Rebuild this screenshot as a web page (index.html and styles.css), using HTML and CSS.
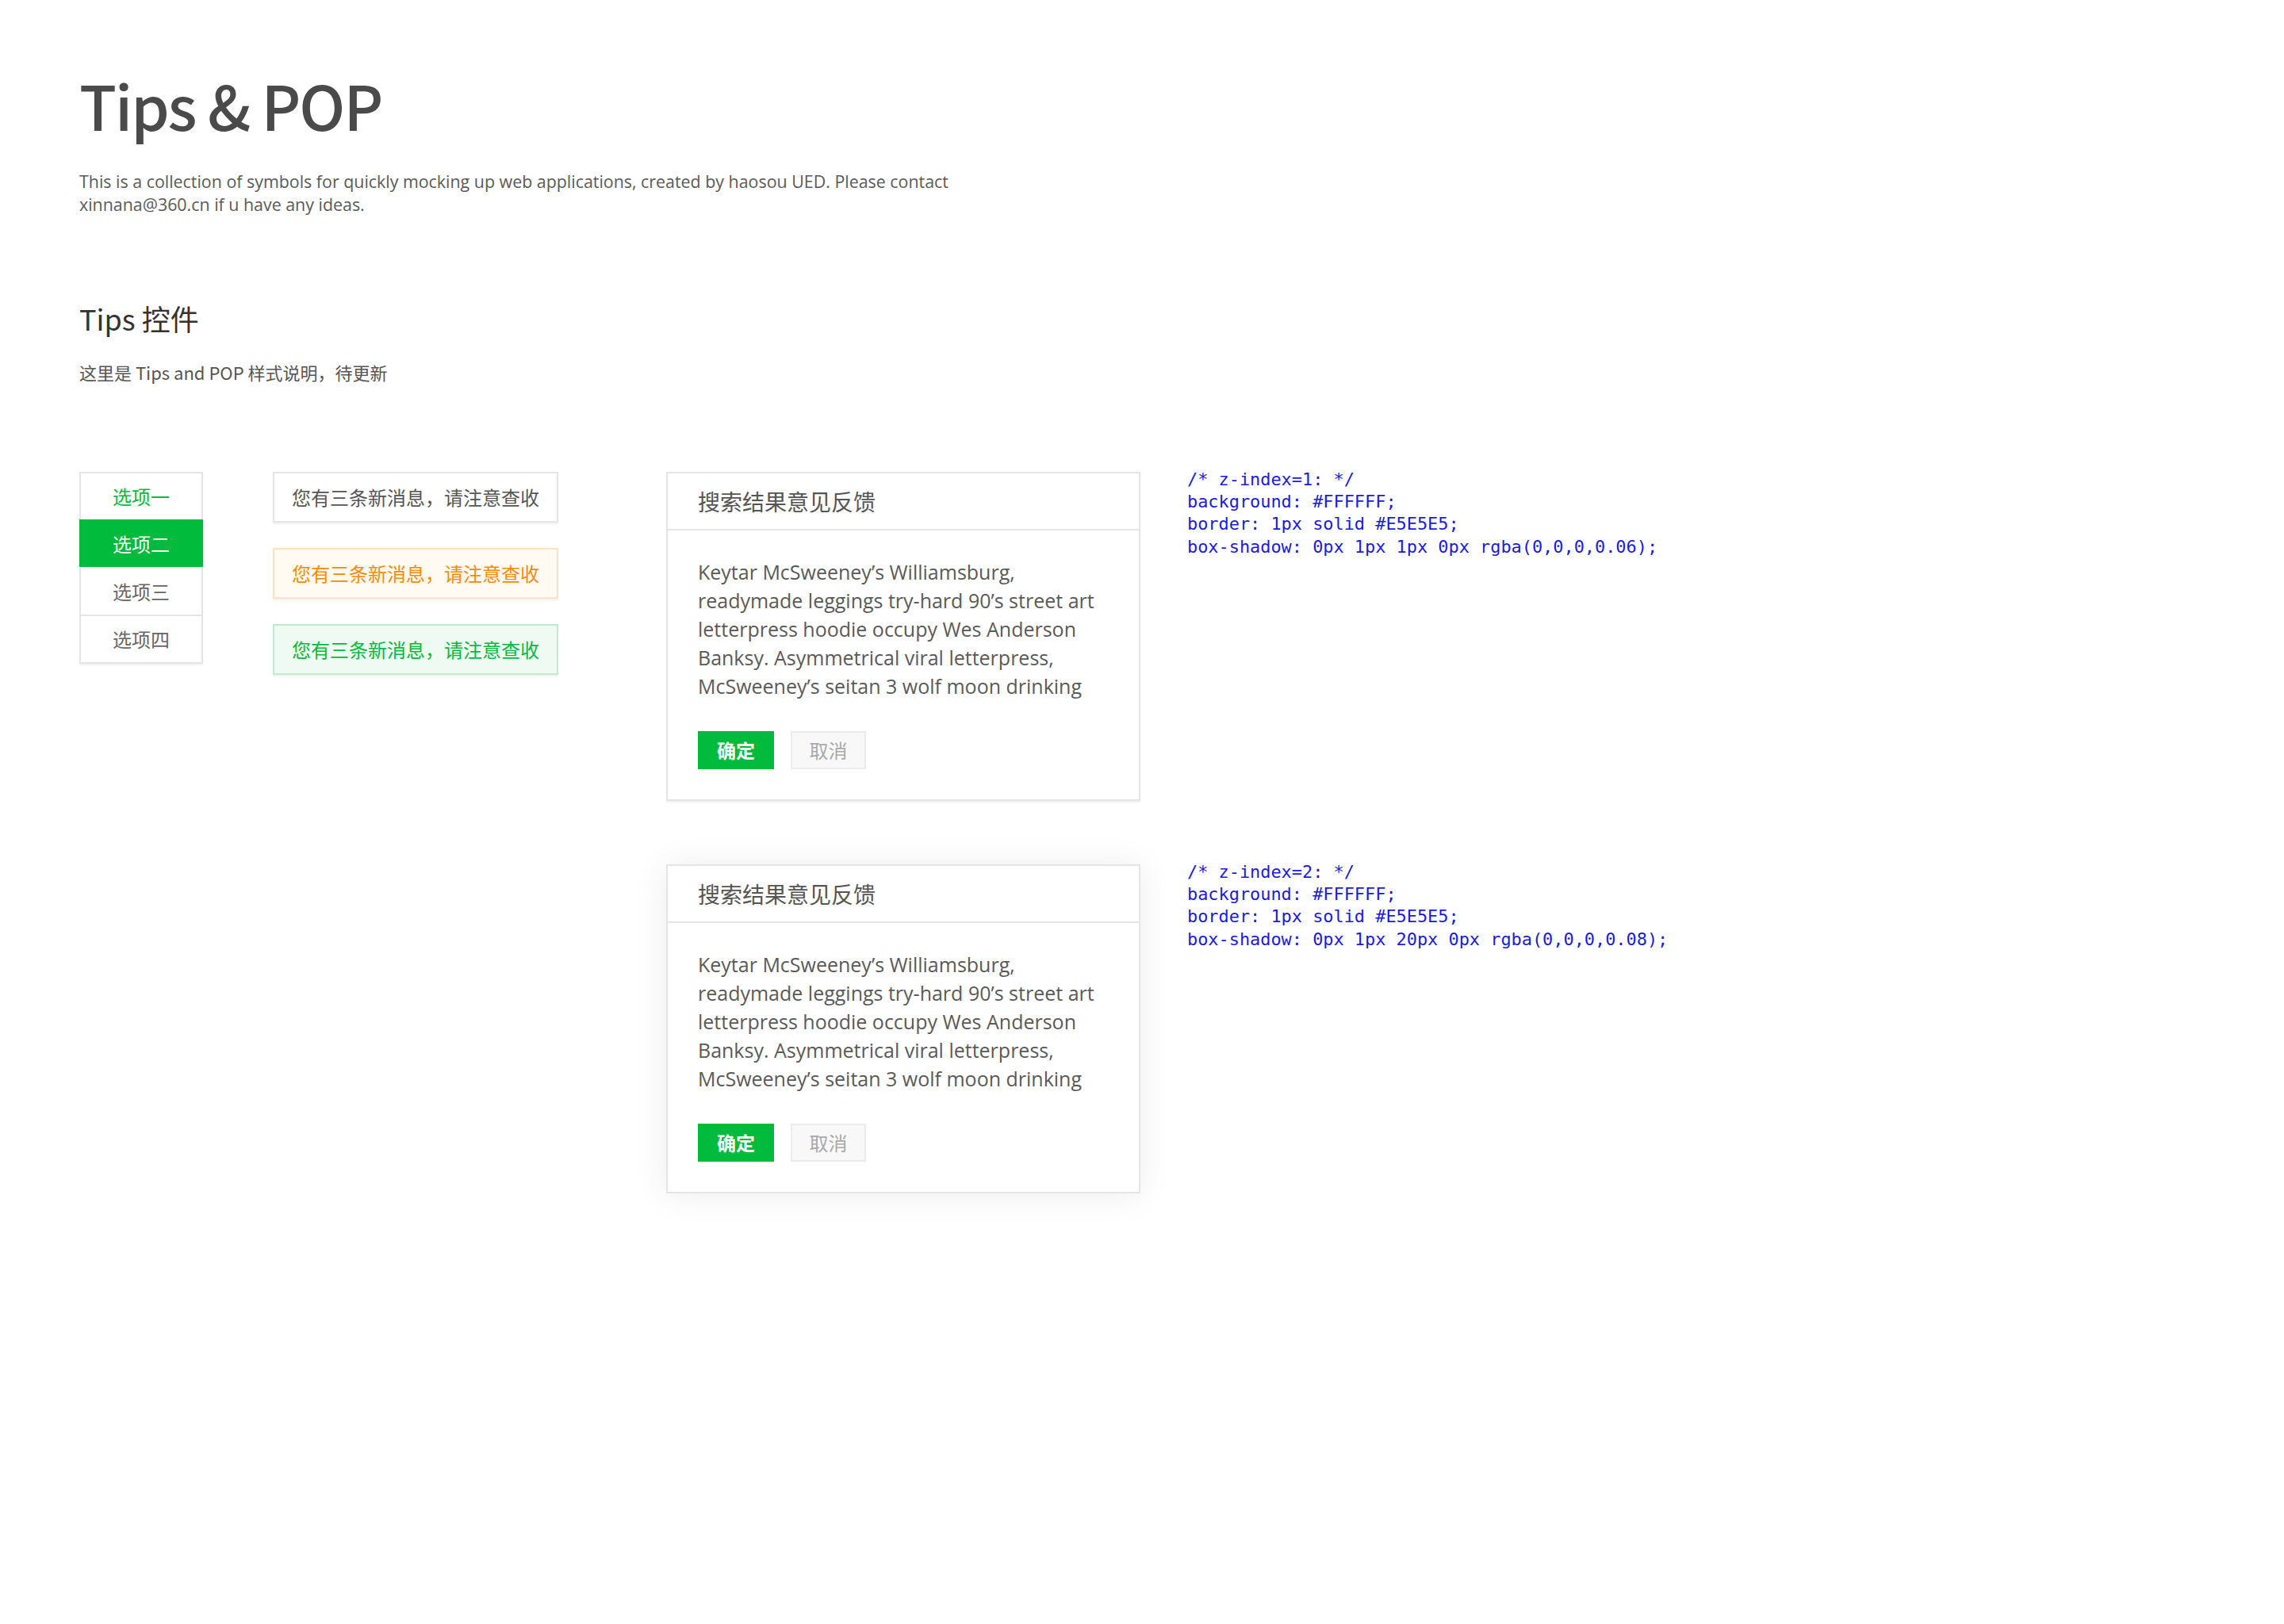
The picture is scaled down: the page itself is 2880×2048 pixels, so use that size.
FILE: index.html
```html
<!DOCTYPE html>
<html lang="zh-CN">
<head>
<meta charset="utf-8">
<title>Tips &amp; POP</title>
<link rel="stylesheet" href="styles.css">
</head>
<body>
<main class="page">
  <header class="intro">
    <h1 class="title">Tips &amp; POP</h1>
    <p class="lead">This is a collection of symbols for quickly mocking up web applications, created by haosou UED. Please contact xinnana@360.cn if u have any ideas.</p>
  </header>

  <section class="section">
    <h2 class="section-title">Tips 控件</h2>
    <p class="section-desc">这里是 Tips and POP 样式说明，待更新</p>

    <div class="demo">
      <ul class="tabs">
        <li class="tab tab-hover">选项一</li>
        <li class="tab tab-active">选项二</li>
        <li class="tab">选项三</li>
        <li class="tab">选项四</li>
      </ul>

      <div class="tips">
        <div class="tip">您有三条新消息，请注意查收</div>
        <div class="tip tip-warn">您有三条新消息，请注意查收</div>
        <div class="tip tip-ok">您有三条新消息，请注意查收</div>
      </div>

      <div class="card card-z1">
        <div class="card-head">搜索结果意见反馈</div>
        <div class="card-body">
          <p class="card-text">Keytar McSweeney’s Williamsburg, readymade leggings try-hard 90’s street art letterpress hoodie occupy Wes Anderson Banksy. Asymmetrical viral letterpress, McSweeney’s seitan 3 wolf moon drinking</p>
          <div class="actions">
            <button class="btn btn-primary" type="button">确定</button>
            <button class="btn btn-default" type="button">取消</button>
          </div>
        </div>
      </div>

      <pre class="code">/* z-index=1: */
background: #FFFFFF;
border: 1px solid #E5E5E5;
box-shadow: 0px 1px 1px 0px rgba(0,0,0,0.06);</pre>

      <div class="card card-z2 row-two">
        <div class="card-head">搜索结果意见反馈</div>
        <div class="card-body">
          <p class="card-text">Keytar McSweeney’s Williamsburg, readymade leggings try-hard 90’s street art letterpress hoodie occupy Wes Anderson Banksy. Asymmetrical viral letterpress, McSweeney’s seitan 3 wolf moon drinking</p>
          <div class="actions">
            <button class="btn btn-primary" type="button">确定</button>
            <button class="btn btn-default" type="button">取消</button>
          </div>
        </div>
      </div>

      <pre class="code row-two">/* z-index=2: */
background: #FFFFFF;
border: 1px solid #E5E5E5;
box-shadow: 0px 1px 20px 0px rgba(0,0,0,0.08);</pre>
    </div>
  </section>
</main>
</body>
</html>
```

FILE: styles.css
```css
* { box-sizing: border-box; }

html, body {
  margin: 0;
  padding: 0;
  background: #ffffff;
}

body {
  font-family: "Noto Sans CJK SC", "Noto Sans", sans-serif;
  color: #555;
}

.page {
  padding: 82px 100px 200px;
}

.title {
  margin: 0;
  font-family: "Noto Sans CJK SC", sans-serif;
  font-weight: 500;
  font-size: 77px;
  line-height: 100px;
  letter-spacing: -2px;
  color: #4a4a4a;
}

.lead {
  margin: 32px 0 0;
  width: 1120px;
  font-family: "Open Sans", "Noto Sans CJK SC", sans-serif;
  font-size: 21.4px;
  line-height: 29px;
  color: #5a5a5a;
}

.section {
  margin-top: 105px;
}

.section-title {
  margin: 0;
  font-family: "Noto Sans CJK SC", sans-serif;
  font-weight: 400;
  font-size: 36px;
  line-height: 48px;
  color: #333;
}

.section-desc {
  margin: 29px 0 0;
  font-family: "Noto Sans CJK SC", sans-serif;
  font-size: 22px;
  line-height: 30px;
  color: #555;
}

.demo {
  margin-top: 111px;
  display: grid;
  grid-template-columns: 244px 496px 657px 1fr;
  row-gap: 80px;
  align-items: start;
}

.row-two { grid-row: 2; }
.card.row-two { grid-column: 3; }
.code.row-two { grid-column: 4; }

/* tabs */
.tabs {
  list-style: none;
  margin: 0;
  padding: 0;
  width: 156px;
  border: 2px solid #e5e5e5;
  background: #fff;
  box-shadow: 0 2px 2px rgba(0,0,0,0.06);
}

.tab {
  height: 60px;
  line-height: 58px;
  text-align: center;
  font-size: 24px;
  color: #666;
  border-top: 2px solid #e5e5e5;
}

.tab:first-child {
  border-top: 0;
  height: 58px;
}

.tab-hover { color: #00bb3c; }

.tab-active {
  margin: 0 -2px;
  background: #00bb3c;
  border-top-color: #00bb3c;
  color: #fff;
}

.tab-active + .tab { border-top-color: #fff; }

/* tips */
.tips {
  width: 360px;
  display: flex;
  flex-direction: column;
  gap: 32px;
}

.tip {
  height: 64px;
  padding: 0 22px;
  line-height: 60px;
  font-size: 24px;
  color: #555;
  background: #fff;
  border: 2px solid #e5e5e5;
  box-shadow: 0 2px 2px rgba(0,0,0,0.06);
  white-space: nowrap;
}

.tip-warn {
  color: #ff8a00;
  background: #fffaf2;
  border-color: #ffe3c0;
}

.tip-ok {
  color: #00bb3c;
  background: #effaf2;
  border-color: #bfeacb;
}

/* card */
.card {
  width: 598px;
  background: #fff;
  border: 2px solid #e5e5e5;
}

.card-z1 { box-shadow: 0 2px 2px rgba(0,0,0,0.06); }
.card-z2 { box-shadow: 0 2px 40px rgba(0,0,0,0.08); }

.card-head {
  height: 72px;
  padding: 0 38px;
  line-height: 70px;
  font-size: 28px;
  color: #555;
  border-bottom: 2px solid #e5e5e5;
}

.card-body {
  padding: 34px 38px 38px;
}

.card-text {
  margin: 0;
  font-family: "Open Sans", "Noto Sans CJK SC", sans-serif;
  font-size: 25px;
  line-height: 36px;
  color: #5a5a5a;
}

.actions {
  margin-top: 39px;
  display: flex;
  gap: 21px;
}

.btn {
  height: 48px;
  margin: 0;
  padding: 0;
  font-family: "Noto Sans CJK SC", sans-serif;
  font-size: 24px;
  line-height: 44px;
  border: 2px solid transparent;
  border-radius: 0;
  cursor: pointer;
}

.btn-primary {
  width: 96px;
  background: #00bb3c;
  border-color: #00bb3c;
  color: #fff;
  font-weight: 700;
}

.btn-default {
  width: 95px;
  background: #f8f8f8;
  border-color: #ebebeb;
  color: #aaa;
}

/* code */
.code {
  margin: -4px 0 0;
  font-family: "DejaVu Sans Mono", "Liberation Mono", monospace;
  font-size: 21.9px;
  line-height: 28.2px;
  color: #1a1ae8;
}
```
